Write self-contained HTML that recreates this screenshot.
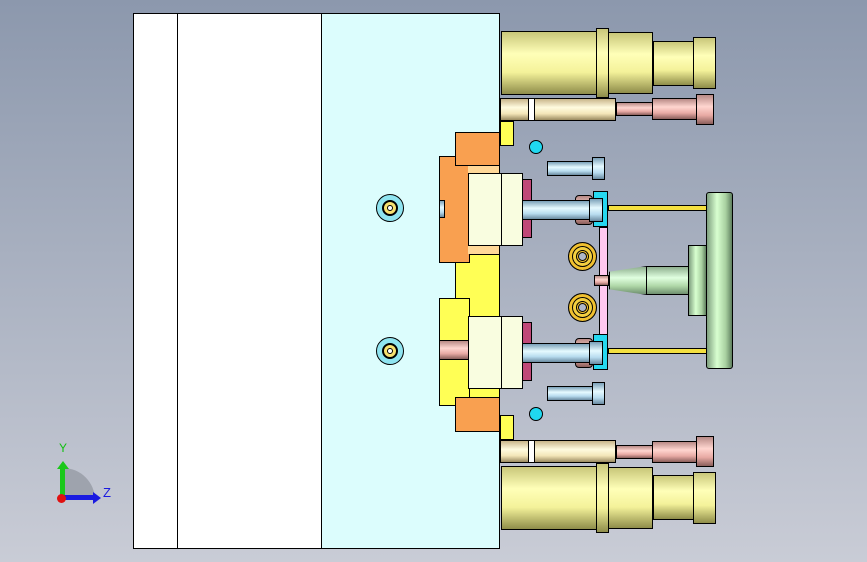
<!DOCTYPE html>
<html><head><style>
body{margin:0;width:867px;height:562px;overflow:hidden;background:linear-gradient(#8c98ad,#c9ccd6);position:relative;font-family:"Liberation Sans",sans-serif}
div{position:absolute;box-sizing:border-box}
.b{border:1px solid #000}
.yc{background:linear-gradient(#c9c77a,#ffffb8 35%,#f4f29a 65%,#8f8d4a);border:1px solid #000}
.pk{background:linear-gradient(#b88a86,#ffd6d0 40%,#e8aaa4 70%,#8a5f5b);border:1px solid #000}
.lc{background:linear-gradient(#c9b58a,#fffbe0 40%,#f3e6b8 70%,#9a8a60);border:1px solid #000}
.bl{background:linear-gradient(#7aa0b8,#e6faff 40%,#b8dcef 70%,#6a8aa0);border:1px solid #000}
.gr{background:linear-gradient(90deg,#7fa07f,#d8ffd0 40%,#a8d0a0 75%,#5f805f);border:1px solid #000}
.cone{background:linear-gradient(#8fb08f,#e0ffe0 40%,#b0d8a8 70%,#6f906f);border:1px solid #000}
</style></head><body>
<div class="b" style="left:133px;top:13px;width:189px;height:536px;background:#fff"></div>
<div class="b" style="left:177px;top:13px;width:1px;height:536px;border-width:0 0 0 1px"></div>
<div class="b" style="left:321px;top:13px;width:179px;height:536px;background:#dcfdfd"></div>
<div style="left:376px;top:194px;width:28px;height:28px;border-radius:50%;background:#8fe4f0;border:1px solid #000"></div>
<div style="left:382px;top:200px;width:16px;height:16px;border-radius:50%;background:#f7e070;border:2px solid #000"></div>
<div style="left:387px;top:205px;width:6px;height:6px;border-radius:50%;background:#fff;border:1px solid #000"></div>
<div style="left:376px;top:337px;width:28px;height:28px;border-radius:50%;background:#8fe4f0;border:1px solid #000"></div>
<div style="left:382px;top:343px;width:16px;height:16px;border-radius:50%;background:#f7e070;border:2px solid #000"></div>
<div style="left:387px;top:348px;width:6px;height:6px;border-radius:50%;background:#fff;border:1px solid #000"></div>
<div class="b" style="left:500px;top:121px;width:14px;height:25px;background:#ffff55"></div>
<div class="b" style="left:500px;top:415px;width:14px;height:25px;background:#ffff55"></div>
<div class="b" style="left:455px;top:254px;width:45px;height:145px;background:#ffff55"></div>
<div class="b" style="left:439px;top:298px;width:31px;height:108px;background:#ffff55"></div>
<div class="b" style="left:439px;top:156px;width:31px;height:107px;background:#f9a050"></div>
<div class="b" style="left:455px;top:132px;width:45px;height:34px;background:#f9a050"></div>
<div class="b" style="left:455px;top:397px;width:45px;height:35px;background:#f9a050"></div>
<div style="left:468px;top:166px;width:31px;height:88px;background:#ffd898"></div>
<div class="pk" style="left:439px;top:340px;width:30px;height:20px"></div>
<div class="bl" style="left:439px;top:200px;width:6px;height:18px"></div>
<div class="b" style="left:468px;top:173px;width:55px;height:73px;background:#f9fde0"></div>
<div class="b" style="left:501px;top:173px;width:1px;height:73px;border-width:0 0 0 1px"></div>
<div class="b" style="left:468px;top:316px;width:55px;height:73px;background:#f9fde0"></div>
<div class="b" style="left:501px;top:316px;width:1px;height:73px;border-width:0 0 0 1px"></div>
<div class="b" style="left:522px;top:179px;width:10px;height:59px;background:#c04878"></div>
<div class="b" style="left:522px;top:322px;width:10px;height:59px;background:#c04878"></div>
<div class="pk" style="left:575px;top:195px;width:18px;height:30px;border-radius:4px"></div>
<div class="bl" style="left:522px;top:200px;width:70px;height:20px"></div>
<div class="pk" style="left:575px;top:338px;width:18px;height:30px;border-radius:4px"></div>
<div class="bl" style="left:522px;top:343px;width:70px;height:20px"></div>
<div class="b" style="left:593px;top:191px;width:15px;height:36px;background:#26d8f0"></div>
<div class="b" style="left:593px;top:334px;width:15px;height:36px;background:#26d8f0"></div>
<div class="bl" style="left:589px;top:198px;width:14px;height:24px"></div>
<div class="bl" style="left:589px;top:341px;width:14px;height:24px"></div>
<div class="b" style="left:599px;top:227px;width:9px;height:108px;background:#ffc8f0"></div>
<div class="pk" style="left:594px;top:275px;width:15px;height:11px"></div>
<div class="yc" style="left:608px;top:205px;width:100px;height:6px;background:#f4e040"></div>
<div class="yc" style="left:608px;top:348px;width:100px;height:6px;background:#f4e040"></div>
<div class="cone" style="left:609px;top:266px;width:38px;height:29px;clip-path:polygon(0 20%,100% 0,100% 100%,0 80%)"></div>
<div class="cone" style="left:646px;top:266px;width:44px;height:29px"></div>
<div class="gr" style="left:688px;top:245px;width:19px;height:71px"></div>
<div class="gr" style="left:706px;top:192px;width:27px;height:177px;border-radius:3px"></div>
<div style="left:568px;top:242px;width:29px;height:29px;border-radius:50%;background:#f0c030;border:1px solid #000;box-shadow:inset 0 0 0 3px #f0c030,inset 0 0 0 4px #000,inset 0 0 0 7px #f4d040,inset 0 0 0 8px #000"></div>
<div style="left:578px;top:252px;width:9px;height:9px;border-radius:50%;background:#b0b8c8;border:1px solid #000"></div>
<div style="left:568px;top:293px;width:29px;height:29px;border-radius:50%;background:#f0c030;border:1px solid #000;box-shadow:inset 0 0 0 3px #f0c030,inset 0 0 0 4px #000,inset 0 0 0 7px #f4d040,inset 0 0 0 8px #000"></div>
<div style="left:578px;top:303px;width:9px;height:9px;border-radius:50%;background:#b0b8c8;border:1px solid #000"></div>
<div class="bl" style="left:547px;top:161px;width:46px;height:15px"></div>
<div class="bl" style="left:592px;top:157px;width:13px;height:23px"></div>
<div class="bl" style="left:547px;top:386px;width:46px;height:15px"></div>
<div class="bl" style="left:592px;top:382px;width:13px;height:23px"></div>
<div style="left:529px;top:140px;width:14px;height:14px;border-radius:50%;background:#20d8f0;border:1px solid #000"></div>
<div style="left:529px;top:407px;width:14px;height:14px;border-radius:50%;background:#20d8f0;border:1px solid #000"></div>
<div class="yc" style="left:501px;top:31px;width:96px;height:64px"></div>
<div class="yc" style="left:596px;top:28px;width:13px;height:70px"></div>
<div class="yc" style="left:608px;top:32px;width:45px;height:62px"></div>
<div class="yc" style="left:653px;top:41px;width:41px;height:45px"></div>
<div class="yc" style="left:693px;top:37px;width:23px;height:52px"></div>
<div class="lc" style="left:500px;top:98px;width:116px;height:23px"></div>
<div class="b" style="left:528px;top:98px;width:7px;height:23px;background:#fff"></div>
<div class="pk" style="left:616px;top:102px;width:37px;height:14px"></div>
<div class="pk" style="left:652px;top:98px;width:45px;height:22px"></div>
<div class="pk" style="left:696px;top:94px;width:18px;height:31px"></div>
<div class="yc" style="left:501px;top:466px;width:96px;height:64px"></div>
<div class="yc" style="left:596px;top:463px;width:13px;height:70px"></div>
<div class="yc" style="left:608px;top:467px;width:45px;height:62px"></div>
<div class="yc" style="left:653px;top:475px;width:41px;height:45px"></div>
<div class="yc" style="left:693px;top:472px;width:23px;height:52px"></div>
<div class="lc" style="left:500px;top:440px;width:116px;height:23px"></div>
<div class="b" style="left:528px;top:440px;width:7px;height:23px;background:#fff"></div>
<div class="pk" style="left:616px;top:445px;width:37px;height:14px"></div>
<div class="pk" style="left:652px;top:441px;width:45px;height:22px"></div>
<div class="pk" style="left:696px;top:436px;width:18px;height:31px"></div>
<div style="left:63px;top:468px;width:32px;height:32px;border-top-right-radius:32px;background:#9ea3ad"></div>
<div style="left:60px;top:467px;width:5px;height:32px;background:#1ac81a"></div>
<div style="left:57px;top:461px;width:0;height:0;border-left:6px solid transparent;border-right:6px solid transparent;border-bottom:8px solid #1ac81a"></div>
<div style="left:62px;top:495px;width:32px;height:5px;background:#1a1ae0"></div>
<div style="left:93px;top:492px;width:0;height:0;border-top:6px solid transparent;border-bottom:6px solid transparent;border-left:8px solid #1a1ae0"></div>
<div style="left:57px;top:494px;width:9px;height:9px;border-radius:50%;background:#e01010"></div>
<div style="left:59px;top:441px;font-size:12px;color:#10c010">Y</div>
<div style="left:103px;top:485px;font-size:13px;color:#1a1ae0">Z</div>
</body></html>
